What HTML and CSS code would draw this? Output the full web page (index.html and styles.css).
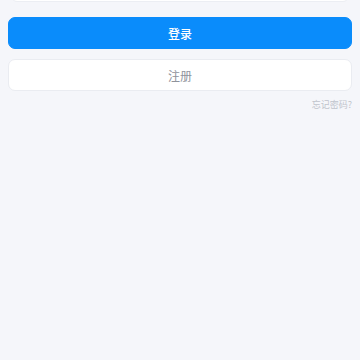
FILE: index.html
```html
<!DOCTYPE html>
<html>
<head>
  <meta charset="utf-8">
  <title>登录</title>
  <link rel="stylesheet" href="styles.css">
</head>
<body>
  <div class="form">
    <div class="field"></div>
    <button class="btn btn-primary">登录</button>
    <button class="btn btn-plain">注册</button>
    <div class="forgot">忘记密码?</div>
  </div>
</body>
</html>
```

FILE: styles.css
```css
body {
  margin: 0;
  background-color: #f5f6fa;
  font-family: "Noto Sans CJK SC", "Noto Sans", sans-serif;
  -webkit-tap-highlight-color: transparent;
}
.form {
  display: flex;
  flex-direction: column;
  padding: 0 8px;
  margin-top: -31px;
}
.field {
  height: 31px;
  margin: 0 3px;
  background: #fff;
  border: 1px solid #eceef3;
  border-radius: 6px;
}
.btn {
  display: block;
  width: 100%;
  height: 32px;
  border-radius: 7px;
  font-family: inherit;
  font-size: 12px;
  padding: 0;
}
.btn-primary {
  margin-top: 15px;
  background: #0a8cfb;
  border: 1px solid #0a8cfb;
  color: #fff;
  font-weight: 500;
}
.btn-plain {
  margin-top: 10px;
  background: #fff;
  border: 1px solid #eaecf1;
  color: #8f939c;
}
.forgot {
  align-self: flex-end;
  margin-top: 7px;
  font-size: 9px;
  color: #c0c4cc;
}
```
